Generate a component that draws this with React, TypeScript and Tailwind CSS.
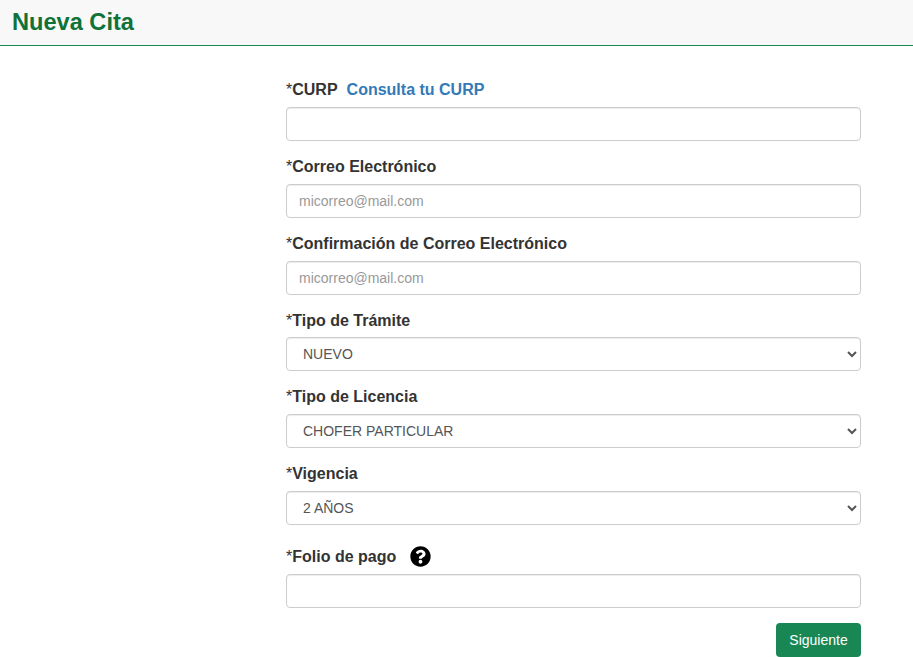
import { ReactNode } from "react";
import { FaQuestionCircle } from "react-icons/fa";

const inputClass =
  "block w-full h-[34px] rounded border border-[#cccccc] bg-white px-3 text-sm text-[#555555] shadow-[inset_0_1px_1px_rgba(0,0,0,0.075)] placeholder:text-[#999999] outline-none";

function Field({ label, extra, tall, children }: { label: string; extra?: ReactNode; tall?: boolean; children: ReactNode }) {
  return (
    <div className="mb-[14px]">
      <label
        className={
          tall
            ? "flex h-[35.5px] items-center text-base leading-6 font-bold text-[#333333]"
            : "mb-[4.75px] flex h-6 items-center text-base leading-6 font-bold text-[#333333]"
        }
      >
        <span className="font-normal">*</span>
        {label}
        {extra}
      </label>
      {children}
    </div>
  );
}

function Select({ value }: { value: string }) {
  return (
    <select defaultValue={value} className={inputClass}>
      <option>{value}</option>
    </select>
  );
}

export default function App() {
  return (
    <div className="h-[657px] overflow-hidden bg-white font-['Liberation_Sans',Arial,sans-serif]">
      <div className="h-[46px] border-b border-b-[#198754] bg-[#f8f8f8] pl-3">
        <h1 className="text-[23.6px] leading-[44px] font-bold text-[#0f7238]">Nueva Cita</h1>
      </div>

      <form className="pt-[32.4px] pr-[52px] pl-[286px]">
        <Field
          label="CURP"
          extra={<a className="ml-[9px] text-[#337ab7]">Consulta tu CURP</a>}
        >
          <input className={inputClass} />
        </Field>
        <Field label="Correo Electrónico">
          <input className={inputClass} placeholder="micorreo@mail.com" />
        </Field>
        <Field label="Confirmación de Correo Electrónico">
          <input className={inputClass} placeholder="micorreo@mail.com" />
        </Field>
        <Field label="Tipo de Trámite">
          <Select value="NUEVO" />
        </Field>
        <Field label="Tipo de Licencia">
          <Select value="CHOFER PARTICULAR" />
        </Field>
        <Field label="Vigencia">
          <Select value="2 AÑOS" />
        </Field>
        <Field
          label="Folio de pago"
          tall
          extra={<FaQuestionCircle className="ml-[14px] text-[21px] text-black" />}
        >
          <input className={inputClass} />
        </Field>
        <div className="mt-[15px] flex justify-end">
          <button
            type="button"
            className="h-[34px] w-[85px] rounded bg-[#198754] text-sm text-white"
          >
            Siguiente
          </button>
        </div>
      </form>
    </div>
  );
}
